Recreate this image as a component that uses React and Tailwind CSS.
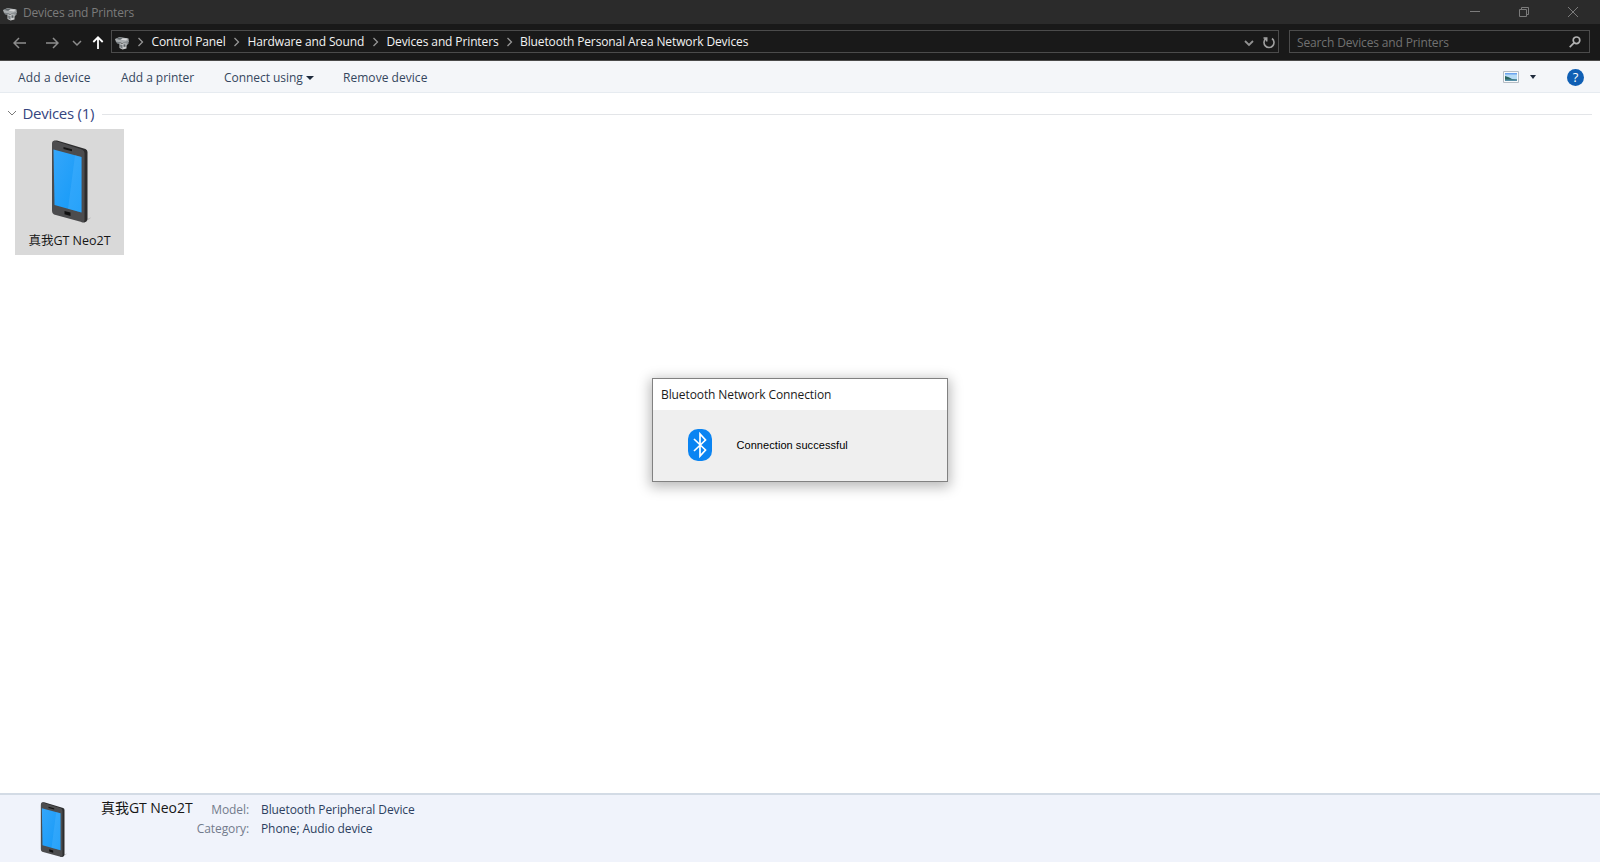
const UI_FONT = "font-['Open_Sans','Noto_Sans_CJK_SC',sans-serif]";

const breadcrumbs = [
  { label: 'Control Panel', width: 'w-[96px]' },
  { label: 'Hardware and Sound', width: 'w-[139px]' },
  { label: 'Devices and Printers', width: 'w-[133.5px]' },
  { label: 'Bluetooth Personal Area Network Devices', width: 'w-[240px]' },
];

const PrinterIcon = ({ className }) => (
  <svg viewBox="0 0 14 14" className={className}>
    <path d="M0 3 4.5 1 13.5 2.5 13.8 6 10 7.5 1 6Z" fill="#a9adaf" />
    <path d="M1 3 4.5 1.6 8 2.2 5 3.8Z" fill="#60676b" />
    <path d="M7 2.4h5.5l-1.5 2-5-.6Z" fill="#d7d8d9" />
    <path d="M1 5.5 6 6.5v2L2 7.4Z" fill="#7b8185" />
    <path d="m8 6.200 5.500-1.400v3l-2 1.700-3.500-1Z" fill="#8b9093" />
    <path d="M4.5 7.5h7v5l-4 1-3-1.5Z" fill="#c9cbcc" />
    <path d="M5 8.5 7.5 9v3.7L5.4 11.5Z" fill="#757b7e" />
    <path d="M8.500 8.300h2v2.500h-2z" fill="#5b6164" />
  </svg>
);

const PhoneIcon = ({ className }) => (
  <svg viewBox="0 0 40 84" className={className}>
    <defs>
      <linearGradient id="screen" x1="0" y1="0" x2="1" y2="1">
        <stop offset="0" stopColor="#35a6fa" />
        <stop offset="1" stopColor="#1199f8" />
      </linearGradient>
    </defs>
    <path d="M33 80 41 77 33 83Z" fill="#777" opacity=".35" />
    <path d="M2 1.5Q3 0 6 .5L34.500 9Q36.500 10 36.500 12V79Q36 82 33 82.500L30 82V10Z" fill="#2c2c2d" />
    <path d="M1 4Q1 0 4.500 1L31 9.500Q33.500 10.500 33.500 13V80Q33.500 83 30.500 82L3 74.500Q1 73.500 1 71Z" fill="#4c4c4e" />
    <path d="M2.500 9.500 30.500 17V72.500L3.500 65Z" fill="url(#screen)" />
    <path d="M24 15.300 30.500 17V72.500L17 68.800Z" fill="#5bb8ff" opacity=".3" />
    <path d="M12.500 7 21 9.300V11.300L12.500 9Z" fill="#151515" />
    <path d="M13.500 71 19.500 72.600V76L13.500 74.200Z" fill="#101010" />
  </svg>
);

const Chevron = ({ className, d = 'm1 2 4 4 4-4' }) => (
  <svg viewBox="0 0 10 8" className={className} fill="none" stroke="currentColor">
    <path d={d} />
  </svg>
);

const TitleBar = () => (
  <header className="flex h-6 items-center bg-[#2b2b2b] text-[#7b7b7b]">
    <PrinterIcon className="mt-1 ml-[3px] h-[14px] w-[14px]" />
    <span className="mt-[2px] ml-[6px] text-[12px] leading-[22px] tracking-[-0.17px]">Devices and Printers</span>
    <div className="mr-[21px] ml-auto flex items-center gap-[37px]">
      <svg viewBox="0 0 12 12" className="h-3 w-3" stroke="currentColor" fill="none">
        <path d="M1 5.500H11" />
      </svg>
      <svg viewBox="0 0 12 12" className="h-3 w-3" stroke="currentColor" fill="none">
        <path d="M1.500 3.500h7v7h-7zM3.500 3.500v-2h7v7h-2" />
      </svg>
      <svg viewBox="0 0 12 12" className="h-3 w-3" stroke="currentColor" fill="none">
        <path d="m1 1 10 10M11 1 1 11" />
      </svg>
    </div>
  </header>
);

const AddressBar = () => (
  <div className="flex h-[37px] items-start border-b border-[#4a4a4a] bg-[#191919] pt-[6px]">
    <div className="flex h-[25px] w-[111px] items-center">
      <svg viewBox="0 0 14 12" className="ml-[13px] h-3 w-[14px]" fill="none" stroke="#8d8d8d" strokeWidth="1.5">
        <path d="M13 6H1M6 1 1 6l5 5" />
      </svg>
      <svg viewBox="0 0 14 12" className="ml-[18px] h-3 w-[14px]" fill="none" stroke="#8d8d8d" strokeWidth="1.5">
        <path d="M1 6h12M8 1l5 5-5 5" />
      </svg>
      <Chevron className="ml-[13px] h-2 w-[10px] stroke-[1.5] text-[#8d8d8d]" />
      <svg viewBox="0 0 12 14" className="ml-[10px] h-[14px] w-3" fill="none" stroke="#fff" strokeWidth="1.8">
        <path d="M6 13V1.500M1.300 6 6 1.300 10.700 6" />
      </svg>
    </div>
    <nav className="flex h-[23px] w-[1168px] items-center border border-[#4b4b4b] text-[12px] text-[#f2f2f2]">
      <PrinterIcon className="mt-[2px] ml-[3px] h-[14px] w-[14px]" />
      <div className="ml-[6px] flex">
        {breadcrumbs.map((crumb) => (
          <div key={crumb.label} className={`flex items-center ${crumb.width}`}>
            <Chevron className="h-[10px] w-[10px] shrink-0 stroke-[1.3] text-[#959595]" d="m3.500 0 4 4-4 4" />
            <span className="ml-[6.5px] leading-5 tracking-[-0.12px] whitespace-nowrap">{crumb.label}</span>
          </div>
        ))}
      </div>
      <Chevron className="mt-[2px] ml-auto h-2 w-[10px] stroke-[1.8] text-[#929292]" />
      <svg viewBox="0 0 14 14" className="mt-[2px] mr-[2px] ml-[8px] h-[14px] w-[14px]" fill="none" stroke="#a0a0a0" strokeWidth="1.6">
        <path d="M10 2.500a5 5 0 1 1-6 0M1.500 2h3.200v3.500" />
      </svg>
    </nav>
    <div className="ml-[10px] flex h-[23px] w-[301px] items-center border border-[#4b4b4b] text-[12px] text-[#717171]">
      <span className="mt-[2px] ml-[7px] leading-[19px] tracking-[-0.14px]">Search Devices and Printers</span>
      <svg viewBox="0 0 12 12" className="mt-px mr-[8px] ml-auto h-3 w-3" fill="none" stroke="#b2b2b2" strokeWidth="1.7">
        <circle cx="7.500" cy="4.300" r="3.300" />
        <path d="M5.200 6.700.7 11.200" />
      </svg>
    </div>
  </div>
);

const Toolbar = () => (
  <div className="flex h-8 items-center border-b border-[#e6ebf0] bg-[#f4f6f9] pt-[2px] text-[12px] tracking-[-0.05px] text-[#34465e]">
    <span className="ml-[18px] w-[103px] tracking-[0.16px]">Add a device</span>
    <span className="w-[103px]">Add a printer</span>
    <span className="flex w-[119px] items-center">
      <span className="w-[82px] whitespace-nowrap">Connect using</span>
      <span className="border-x-[4px] border-t-[4px] border-x-transparent border-t-[#1e2a3c]" />
    </span>
    <span className="tracking-[0.04px]">Remove device</span>
    <svg viewBox="0 0 16 12" className="mb-px ml-auto h-3 w-4">
      <path d="M.5.5h15v11H.5z" fill="#f8fafb" stroke="#b5bdc5" />
      <path d="M2 2h12v8H2z" fill="#b7dcf6" />
      <path d="M2 2h12v1.500H2z" fill="#6ca4ee" />
      <path d="M2 5q4 1 7 3l5 .5V10H2z" fill="#2c6660" />
      <path d="M2 8.500h12V10H2z" fill="#5790a8" />
    </svg>
    <span className="mb-px ml-[11px] border-x-[3.5px] border-t-[4px] border-x-transparent border-t-[#1e2a3c]" />
    <span className="mr-4 mb-px ml-[31px] flex h-[17px] w-[17px] items-center justify-center rounded-full bg-[#0f5fb4] text-[13px] leading-none font-medium text-white">
      ?
    </span>
  </div>
);

const DeviceList = () => (
  <main className="flex-1 bg-white">
    <div className="mt-[10px] flex h-[22px] items-center">
      <Chevron className="mb-[2px] ml-[7px] h-2 w-[10px] text-[#7a7a7a]" />
      <span className="mb-[2px] ml-[5.5px] w-[79.5px] text-[15px] leading-[20px] tracking-[-0.28px] whitespace-nowrap text-[#35457f]">
        Devices (1)
      </span>
      <span className="mr-2 h-px flex-1 bg-[#e3e5e8]" />
    </div>
    <div className="mt-[4px] ml-[15px] flex h-[126px] w-[109px] flex-col items-center bg-[#d9d9d9]">
      <PhoneIcon className="mt-[11px] ml-[2px] h-[84px] w-10" />
      <span className="mt-[7px] text-[12.5px] leading-5 whitespace-nowrap text-[#161616]">真我GT Neo2T</span>
    </div>
  </main>
);

const DetailsPane = () => (
  <footer className="flex h-[69px] border-t-2 border-[#d3dbe5] bg-[#f0f3fb]">
    <PhoneIcon className="mt-[7px] ml-[40px] h-[56px] w-[27px]" />
    <span className="mt-[2px] ml-[34px] w-[95px] text-[14px] leading-[21px] tracking-[-0.05px] whitespace-nowrap text-[#161616]">
      真我GT Neo2T
    </span>
    <dl className="mt-[5px] grid h-[38px] grid-cols-[53px_auto] gap-x-[12px] text-[12px] leading-[19px] tracking-[-0.1px]">
      <dt className="text-right text-[#737b8c]">Model:</dt>
      <dd className="text-[#2d3f60]">Bluetooth Peripheral Device</dd>
      <dt className="text-right text-[#737b8c]">Category:</dt>
      <dd className="text-[#2d3f60]">Phone; Audio device</dd>
    </dl>
  </footer>
);

const ConnectionDialog = () => (
  <div className="absolute top-[378px] left-[652px] flex h-[104px] w-[296px] flex-col border border-[#818181] bg-[#efefef] shadow-[0_3px_12px_2px_rgba(0,0,0,0.28)]">
    <div className="h-[31px] bg-white pl-[8px] text-[12px] leading-[31px] tracking-[-0.1px] text-[#1b1b1b]">
      Bluetooth Network Connection
    </div>
    <div className="flex flex-1 items-center pb-px">
      <svg viewBox="0 0 24 32" className="ml-[35px] h-8 w-6">
        <rect width="24" height="32" rx="10" fill="#0a84f2" />
        <path d="m6 10 11.500 11-5.500 6V5l5.500 6L6 22" fill="none" stroke="#fff" strokeWidth="1.7" />
      </svg>
      <span className="ml-[24.5px] font-['Liberation_Sans',sans-serif] text-[11px] tracking-[0.06px] text-black">
        Connection successful
      </span>
    </div>
  </div>
);

export default function App() {
  return (
    <div className={`relative flex h-[862px] w-[1600px] flex-col overflow-hidden ${UI_FONT}`}>
      <TitleBar />
      <AddressBar />
      <Toolbar />
      <DeviceList />
      <DetailsPane />
      <ConnectionDialog />
    </div>
  );
}
